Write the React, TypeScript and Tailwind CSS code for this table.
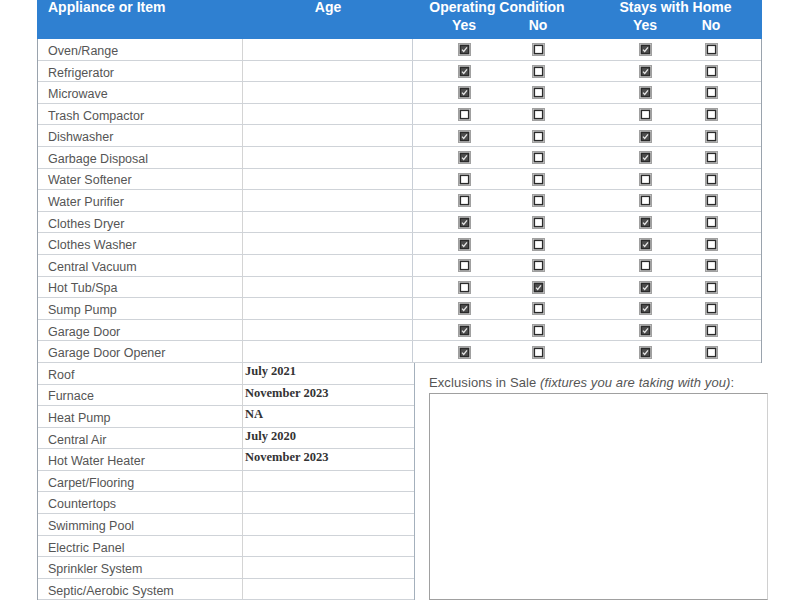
import React from 'react';

type Row = { name: string; oc: 'yes' | 'no' | null; sh: 'yes' | 'no' | null };

const checkRows: Row[] = [
  { name: 'Oven/Range', oc: 'yes', sh: 'yes' },
  { name: 'Refrigerator', oc: 'yes', sh: 'yes' },
  { name: 'Microwave', oc: 'yes', sh: 'yes' },
  { name: 'Trash Compactor', oc: null, sh: null },
  { name: 'Dishwasher', oc: 'yes', sh: 'yes' },
  { name: 'Garbage Disposal', oc: 'yes', sh: 'yes' },
  { name: 'Water Softener', oc: null, sh: null },
  { name: 'Water Purifier', oc: null, sh: null },
  { name: 'Clothes Dryer', oc: 'yes', sh: 'yes' },
  { name: 'Clothes Washer', oc: 'yes', sh: 'yes' },
  { name: 'Central Vacuum', oc: null, sh: null },
  { name: 'Hot Tub/Spa', oc: 'no', sh: 'yes' },
  { name: 'Sump Pump', oc: 'yes', sh: 'yes' },
  { name: 'Garage Door', oc: 'yes', sh: 'yes' },
  { name: 'Garage Door Opener', oc: 'yes', sh: 'yes' },
];

const ageRows: { name: string; age?: string }[] = [
  { name: 'Roof', age: 'July 2021' },
  { name: 'Furnace', age: 'November 2023' },
  { name: 'Heat Pump', age: 'NA' },
  { name: 'Central Air', age: 'July 2020' },
  { name: 'Hot Water Heater', age: 'November 2023' },
  { name: 'Carpet/Flooring' },
  { name: 'Countertops' },
  { name: 'Swimming Pool' },
  { name: 'Electric Panel' },
  { name: 'Sprinkler System' },
  { name: 'Septic/Aerobic System' },
];

function Box({ checked }: { checked: boolean }) {
  return (
    <svg width="13" height="13" viewBox="0 0 13 13">
      <rect x="0.5" y="0.5" width="12" height="12" fill="#d2d2d2" stroke="#a0a0a0" />
      <rect
        x="2.4"
        y="2.4"
        width="8.2"
        height="8.2"
        fill={checked ? '#4d4d4d' : '#ffffff'}
        stroke="#2a2a2a"
        strokeWidth="1.4"
      />
      {checked && (
        <path d="M4 6.6 L5.7 8.4 L9 4.4" fill="none" stroke="#e6e6e6" strokeWidth="1.3" />
      )}
    </svg>
  );
}

export default function App() {
  const label = 'pl-[10px] pt-[4px] flex items-center text-[12.5px] text-[#555]';
  return (
    <div
      className="w-[800px] h-[600px] bg-white overflow-hidden pl-[37px]"
      style={{ fontFamily: '"Liberation Sans", Arial, sans-serif' }}
    >
      <div className="w-[725px]">
        {/* Header */}
        <div className="h-[39px] bg-[#2f80d1] text-white font-bold text-[14px] flex">
          <div className="w-[206px] pl-[11px] leading-[15px]">Appliance or Item</div>
          <div className="w-[170px] text-center leading-[15px]">Age</div>
          <div className="w-[176px] flex flex-col">
            <div className="text-center leading-[15px] pr-[8px]">Operating Condition</div>
            <div className="flex pl-[14px] mt-[3px] leading-[15px]">
              <div className="w-[74px] text-center">Yes</div>
              <div className="w-[74px] text-center">No</div>
            </div>
          </div>
          <div className="flex-1 flex flex-col">
            <div className="text-center leading-[15px]">Stays with Home</div>
            <div className="flex pl-[23px] mt-[3px] leading-[15px]">
              <div className="w-[66px] text-center">Yes</div>
              <div className="w-[66px] text-center">No</div>
            </div>
          </div>
        </div>

        {/* Checkbox rows */}
        <div className="border-l border-r border-[#9aa3ad]">
          {checkRows.map((r) => (
            <div key={r.name} className="h-[21.6px] flex border-b border-[#cfd3d8]">
              <div className={`w-[205px] border-r border-[#d4d4d4] ${label}`}>{r.name}</div>
              <div className="w-[170px] border-r border-[#c8ced6]" />
              <div className="w-[176px] flex pl-[14px] items-center pt-[1px]">
                <div className="w-[74px] flex justify-center">
                  <Box checked={r.oc === 'yes'} />
                </div>
                <div className="w-[74px] flex justify-center">
                  <Box checked={r.oc === 'no'} />
                </div>
              </div>
              <div className="flex-1 flex pl-[23px] items-center pt-[1px]">
                <div className="w-[66px] flex justify-center">
                  <Box checked={r.sh === 'yes'} />
                </div>
                <div className="w-[66px] flex justify-center">
                  <Box checked={r.sh === 'no'} />
                </div>
              </div>
            </div>
          ))}
        </div>

        {/* Age rows + exclusions */}
        <div className="flex">
          <div className="w-[377px] border-l border-[#9aa3ad]">
            {ageRows.map((r) => (
              <div key={r.name} className="h-[21.6px] flex border-b border-[#cfd3d8]">
                <div className={`w-[205px] border-r border-[#d4d4d4] ${label}`}>{r.name}</div>
                <div
                  className="w-[171px] pl-[2px] pt-[1px] text-[12.5px] font-bold text-[#333] leading-[14px]"
                  style={{ fontFamily: '"Liberation Serif", "Times New Roman", serif' }}
                >
                  {r.age}
                </div>
              </div>
            ))}
          </div>
          <div className="flex-1 border-l border-[#a4b0bc] pl-[14px] pt-[12px] flex flex-col">
            <div className="text-[13px] text-[#555] leading-[15px] tracking-[0.1px]">
              Exclusions in Sale <span className="italic">(fixtures you are taking with you)</span>:
            </div>
            <div className="mt-[3px] w-[339px] flex-1 border border-[#a0a0a0] border-r-[#d0d0d0] bg-white" />
          </div>
        </div>
      </div>
    </div>
  );
}
